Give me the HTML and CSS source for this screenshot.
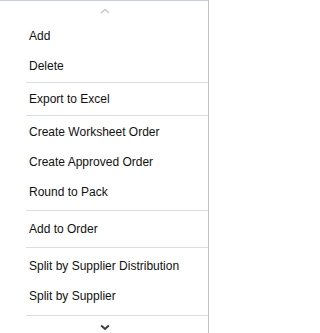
FILE: index.html
```html
<!DOCTYPE html>
<html>
<head>
<meta charset="utf-8">
<link rel="stylesheet" href="styles.css">
</head>
<body>
<div class="menu">
  <div class="scroll scroll-up">
    <svg width="10" height="6" viewBox="0 0 10 6"><path d="M1 5 L5 1.5 L9 5" fill="none" stroke="#c9c9c9" stroke-width="1.6"/></svg>
  </div>
  <ul class="group">
    <li class="item">Add</li>
    <li class="item">Delete</li>
  </ul>
  <div class="sep sep-tight"></div>
  <ul class="group">
    <li class="item">Export to Excel</li>
  </ul>
  <div class="sep sep-tight"></div>
  <ul class="group">
    <li class="item">Create Worksheet Order</li>
    <li class="item">Create Approved Order</li>
    <li class="item">Round to Pack</li>
  </ul>
  <div class="sep sep-wide"></div>
  <ul class="group">
    <li class="item">Add to Order</li>
  </ul>
  <div class="sep sep-wide"></div>
  <ul class="group">
    <li class="item">Split by Supplier Distribution</li>
    <li class="item">Split by Supplier</li>
  </ul>
  <div class="sep sep-last"></div>
  <div class="scroll scroll-down">
    <svg width="10" height="7" viewBox="0 0 10 7"><path d="M1.2 1.5 L5 5 L8.8 1.5" fill="none" stroke="#3c3c3c" stroke-width="2"/></svg>
  </div>
</div>
</body>
</html>
```
FILE: styles.css
```css
html, body {
  margin: 0;
  padding: 0;
  background: #ffffff;
}
.menu {
  width: 208px;
  height: 332px;
  border-top: 1px solid #c8d1da;
  border-right: 1px solid #c2c2c2;
  background: #ffffff;
  font-family: "Liberation Sans", Arial, sans-serif;
  font-size: 12px;
  color: #111111;
  display: flex;
  flex-direction: column;
  overflow: hidden;
}
.scroll {
  display: flex;
  justify-content: center;
  align-items: center;
}
.scroll-up {
  height: 20px;
  flex: none;
}
.scroll-up svg {
  margin-left: 2px;
}
.scroll-down {
  height: 14px;
  flex: none;
  margin-left: 2px;
  padding-top: 4px;
}
.group {
  list-style: none;
  margin: 0;
  padding: 0;
  flex: none;
}
.item {
  height: 30px;
  line-height: 30px;
  padding-left: 29px;
  white-space: nowrap;
}
.sep {
  height: 1px;
  flex: none;
  margin: 2px 0 2px 26px;
  background: #d9dee4;
}
.sep-tight {
  margin-top: 1px;
  margin-bottom: 1px;
}
.sep-wide {
  margin-top: 3px;
  margin-bottom: 3px;
}
.sep-last {
  margin-top: 4px;
  margin-bottom: 0;
}
```
